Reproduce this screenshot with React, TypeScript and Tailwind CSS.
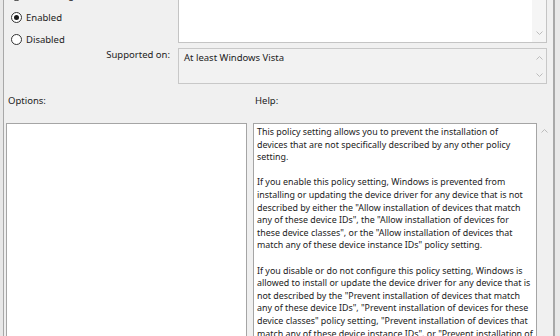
import React from "react";

const FONT = { fontFamily: '"Noto Sans", "Liberation Sans", sans-serif' };

const helpParagraphs: string[][] = [
  [
    "This policy setting allows you to prevent the installation of",
    "devices that are not specifically described by any other policy",
    "setting.",
  ],
  [
    "If you enable this policy setting, Windows is prevented from",
    "installing or updating the device driver for any device that is not",
    'described by either the "Allow installation of devices that match',
    'any of these device IDs", the "Allow installation of devices for',
    'these device classes", or the "Allow installation of devices that',
    'match any of these device instance IDs" policy setting.',
  ],
  [
    "If you disable or do not configure this policy setting, Windows is",
    "allowed to install or update the device driver for any device that is",
    'not described by the "Prevent installation of devices that match',
    'any of these device IDs", "Prevent installation of devices for these',
    'device classes" policy setting, "Prevent installation of devices that',
    'match any of these device instance IDs", or "Prevent installation of',
  ],
];

function Chevron({ up = false }: { up?: boolean }) {
  return (
    <svg width="7" height="4" viewBox="0 0 7 4" className="block">
      <polyline
        points={up ? "0.5,3.5 3.5,0.5 6.5,3.5" : "0.5,0.5 3.5,3.5 6.5,0.5"}
        fill="none"
        stroke="#bcbcbc"
        strokeWidth="1"
      />
    </svg>
  );
}

function Radio({ label, checked = false }: { label: string; checked?: boolean }) {
  return (
    <div className="h-[22px] flex items-center gap-[4px]">
      <span className="w-[11px] h-[11px] rounded-full border border-[#333] bg-white flex items-center justify-center">
        {checked && <span className="w-[5px] h-[5px] rounded-full bg-[#1a1a1a]" />}
      </span>
      <span className="text-[9.5px] leading-[13px]">{label}</span>
    </div>
  );
}

export default function App() {
  return (
    <div
      className="w-[560px] h-[336px] overflow-hidden bg-[#e8e8e8] text-[#222]"
      style={FONT}
    >
      <div className="ml-[3px] w-[552px] h-[336px] overflow-hidden border-l border-r-2 border-[#a8a8a8] bg-[#f0f0f0] flex flex-col">
        {/* state + comment + supported */}
        <div className="shrink-0 -mt-[20px] grid grid-cols-[174px_369px] grid-rows-[68px_36px]">
          <div className="pl-[7px] pt-[4px]">
            <Radio label="Not Configured" />
            <Radio label="Enabled" checked />
            <Radio label="Disabled" />
          </div>
          <div className="h-[63px] border border-[#c4c4c4] bg-white flex">
            <div className="flex-1" />
            <div className="w-[14px] bg-[#f5f5f5] flex flex-col justify-end items-center pb-[7px]">
              <Chevron />
            </div>
          </div>
          <div className="pr-[8px] text-right text-[9.5px] leading-[13px]">Supported on:</div>
          <div className="h-[36px] border border-[#c8c8c8] bg-[#f2f2f2] flex">
            <div className="flex-1 pl-[5px] pt-[2px] text-[9.5px] leading-[13px]">At least Windows Vista</div>
            <div className="w-[14px] flex flex-col justify-between items-center pt-[7px] pb-[6px]">
              <Chevron up />
              <Chevron />
            </div>
          </div>
        </div>

        {/* labels */}
        <div className="shrink-0 h-[39px] grid grid-cols-[249px_auto] pt-[10px] text-[9.5px] leading-[13px]">
          <div className="pl-[4px]">Options:</div>
          <div className="pl-[2px]">Help:</div>
        </div>

        {/* options + help */}
        <div className="shrink-0 ml-[2px] flex items-start">
          <div className="w-[241px] h-[260px] border border-[#a5a5a5] bg-white" />
          <div className="ml-[6px] w-[284px] h-[260px] overflow-hidden border border-[#a5a5a5] bg-white pl-[3px] pt-[2px] text-[8.9px] leading-[12.6px] whitespace-nowrap">
            {helpParagraphs.map((para, i) => (
              <div key={i} className="mb-[12.6px]">
                {para.map((line, j) => (
                  <div key={j}>{line}</div>
                ))}
              </div>
            ))}
          </div>
          <div className="w-[15px] flex justify-center pt-[6px]">
            <Chevron up />
          </div>
        </div>
      </div>
    </div>
  );
}
